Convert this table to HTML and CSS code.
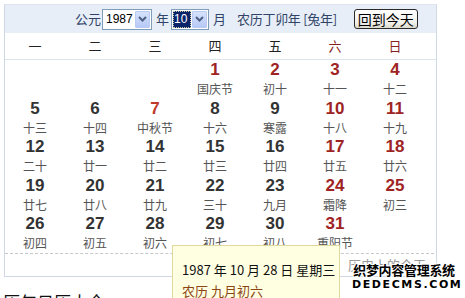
FILE: index.html
```html
<!DOCTYPE html>
<html lang="zh">
<head>
<meta charset="utf-8">
<link rel="stylesheet" href="styles.css">
</head>
<body>
<div class="page">
  <div class="cal">
    <div class="head">
      <span class="lbl l1">公元</span>
      <span class="sel y"><span class="val">1987</span><span class="arr"><svg width="9" height="6" viewBox="0 0 9 6"><path d="M1 1 L4.5 4.5 L8 1" fill="none" stroke="#4d6185" stroke-width="2"/></svg></span></span>
      <span class="lbl l2">年</span>
      <span class="sel m"><span class="val hl">10</span><span class="arr"><svg width="9" height="6" viewBox="0 0 9 6"><path d="M1 1 L4.5 4.5 L8 1" fill="none" stroke="#4d6185" stroke-width="2"/></svg></span></span>
      <span class="lbl l3">月</span>
      <span class="lbl l4">农历丁卯年 [兔年]</span>
      <span class="btn">回到今天</span>
    </div>
    <div class="week">
      <span>一</span><span>二</span><span>三</span><span>四</span><span>五</span><span class="we">六</span><span class="we">日</span>
    </div>
    <div class="days">
      <div class="d"></div><div class="d"></div><div class="d"></div>
      <div class="d"><b class="r">1</b><i>国庆节</i></div>
      <div class="d"><b class="r">2</b><i>初十</i></div>
      <div class="d"><b class="r">3</b><i>十一</i></div>
      <div class="d"><b class="r">4</b><i>十二</i></div>
      <div class="d"><b>5</b><i>十三</i></div>
      <div class="d"><b>6</b><i>十四</i></div>
      <div class="d"><b class="r2">7</b><i>中秋节</i></div>
      <div class="d"><b>8</b><i>十六</i></div>
      <div class="d"><b>9</b><i>寒露</i></div>
      <div class="d"><b class="r">10</b><i>十八</i></div>
      <div class="d"><b class="r">11</b><i>十九</i></div>
      <div class="d"><b>12</b><i>二十</i></div>
      <div class="d"><b>13</b><i>廿一</i></div>
      <div class="d"><b>14</b><i>廿二</i></div>
      <div class="d"><b>15</b><i>廿三</i></div>
      <div class="d"><b>16</b><i>廿四</i></div>
      <div class="d"><b class="r">17</b><i>廿五</i></div>
      <div class="d"><b class="r">18</b><i>廿六</i></div>
      <div class="d"><b>19</b><i>廿七</i></div>
      <div class="d"><b>20</b><i>廿八</i></div>
      <div class="d"><b>21</b><i>廿九</i></div>
      <div class="d"><b>22</b><i>三十</i></div>
      <div class="d"><b>23</b><i>九月</i></div>
      <div class="d"><b class="r">24</b><i>霜降</i></div>
      <div class="d"><b class="r">25</b><i>初三</i></div>
      <div class="d"><b>26</b><i>初四</i></div>
      <div class="d"><b>27</b><i>初五</i></div>
      <div class="d"><b>28</b><i>初六</i></div>
      <div class="d"><b>29</b><i>初七</i></div>
      <div class="d"><b>30</b><i>初八</i></div>
      <div class="d"><b class="r">31</b><i>重阳节</i></div>
      <div class="d"></div>
    </div>
    <div class="foot"><span class="hist">历史上的今天</span></div>
  </div>
  <div class="title">历年日历大全</div>

  <div class="tip">
    <div class="t1">1987 年 10 月 28 日 星期三</div>
    <div class="t2">农历 九月初六</div>
  </div>
  <div class="wm">
    <div class="w1">织梦内容管理系统</div>
    <div class="w2">DEDECMS.COM</div>
  </div>
</div>
</body>
</html>
```

FILE: styles.css
```css
html, body {
  margin: 0;
  padding: 0;
  background: #fff;
  overflow: hidden;
}
body {
  font-family: "Liberation Sans", "Noto Sans CJK SC", sans-serif;
  color: #333;
  width: 465px;
  height: 298px;
}
.page {
  position: relative;
  width: 465px;
  height: 298px;
  padding: 4px 0 0 4px;
  box-sizing: border-box;
  overflow: hidden;
}
.cal {
  width: 433px;
  border: 1px solid #cfd9e5;
  border-top-color: #dde5ef;
  box-sizing: border-box;
}
.head {
  height: 28px;
  background: #e8eef7;
  display: flex;
  align-items: center;
  font-size: 13px;
  color: #2f4468;
  font-family: "Noto Sans CJK SC", sans-serif;
}
.lbl { line-height: 16px; }
.l1 { margin-left: 70px; }
.l2 { margin-left: 4px; }
.l3 { margin-left: 4px; }
.l4 { margin-left: 11px; letter-spacing: -0.3px; }
.sel {
  display: inline-flex;
  align-items: center;
  height: 21px;
  box-sizing: border-box;
  border: 1px solid #7f9db9;
  background: #fff;
  margin-left: 1px;
  padding: 1px;
  font-family: "Liberation Sans", sans-serif;
  font-size: 12px;
  color: #000;
}
.sel.y { width: 50px; margin-left: 1px; }
.sel.m { width: 38px; margin-left: 2px; }
.val { flex: 1; padding-left: 2px; line-height: 17px; height: 17px; }
.val.hl {
  flex: 0 0 auto;
  width: 17px;
  padding-left: 1px;
  background: #0a246a;
  color: #fff;
  outline: 1px dotted #c9c9a0;
  outline-offset: -1px;
  margin-right: 1px;
}
.arr {
  width: 15px;
  height: 17px;
  box-sizing: border-box;
  border: 1px solid #b9cbf3;
  border-radius: 1px;
  background: linear-gradient(#d6e2fc, #b7c9f6);
  display: flex;
  align-items: center;
  justify-content: center;
}
.btn {
  margin-left: 17px;
  width: 64px;
  height: 20px;
  box-sizing: border-box;
  border: 1px solid #2a2a2a;
  border-radius: 3px;
  background: linear-gradient(#ffffff, #f1f0ea 70%, #dcd9cc);
  color: #000;
  font-size: 14px;
  line-height: 18px;
  text-align: center;
}
.week {
  display: grid;
  grid-template-columns: repeat(7, 60px);
  height: 26px;
  border-bottom: 1px solid #dde4ee;
  font-family: "Noto Sans CJK SC", sans-serif;
  font-size: 13px;
  color: #222;
  line-height: 25px;
  text-align: center;
}
.week .we { color: #8a1f1f; }
.days {
  display: grid;
  grid-template-columns: repeat(7, 60px);
  grid-auto-rows: 38.5px;
  margin: 0 0 0 2px;
  width: 429px;
  border-bottom: 1px dashed #c8c8c8;
  box-sizing: border-box;
  position: relative;
  left: -2px;
}
.d {
  display: flex;
  flex-direction: column;
  align-items: center;
  padding-top: 1px;
}
.d b {
  font-family: "Liberation Sans", sans-serif;
  font-weight: bold;
  font-size: 17px;
  line-height: 18px;
  color: #333;
}
.d b.r { color: #9e2424; }
.d b.r2 { color: #c0392b; }
.d i {
  font-style: normal;
  font-family: "Noto Sans CJK SC", sans-serif;
  font-size: 12px;
  line-height: 17px;
  color: #555;
  margin-top: 1px;
}
.foot {
  height: 22px;
  display: flex;
  justify-content: flex-end;
  padding-right: 10px;
}
.hist {
  font-family: "Noto Sans CJK SC", sans-serif;
  font-size: 13px;
  line-height: 22px;
  color: #999;
}
.title {
  margin: 15px 0 0 -1px;
  font-family: "Noto Sans CJK SC", sans-serif;
  font-size: 17px;
  line-height: 20px;
  color: #111;
}
.tip {
  position: absolute;
  left: 172px;
  top: 245px;
  width: 168px;
  height: 70px;
  box-sizing: border-box;
  background: #ffffe1;
  border: 1px solid #e3d89c;
  padding: 14px 0 0 9px;
  font-family: "Noto Sans CJK SC", sans-serif;
  font-size: 13px;
}
.t1 { color: #111; line-height: 20px; }
.t2 { color: #8b4513; line-height: 20px; margin-top: 1px; }
.wm {
  position: absolute;
  left: 352px;
  top: 262px;
  width: 104px;
  text-align: center;
  color: #000;
  font-weight: bold;
  text-shadow: 1px 0 0 #fff, -1px 0 0 #fff, 0 1px 0 #fff, 0 -1px 0 #fff, 1px 1px 0 #fff, -1px -1px 0 #fff, 1px -1px 0 #fff, -1px 1px 0 #fff;
}
.w1 {
  font-family: "Noto Sans CJK SC", sans-serif;
  font-size: 13px;
  line-height: 16px;
  letter-spacing: -0.3px;
}
.w2 {
  font-family: "DejaVu Sans", sans-serif;
  font-size: 11px;
  line-height: 13px;
  letter-spacing: 1.6px;
}
```
